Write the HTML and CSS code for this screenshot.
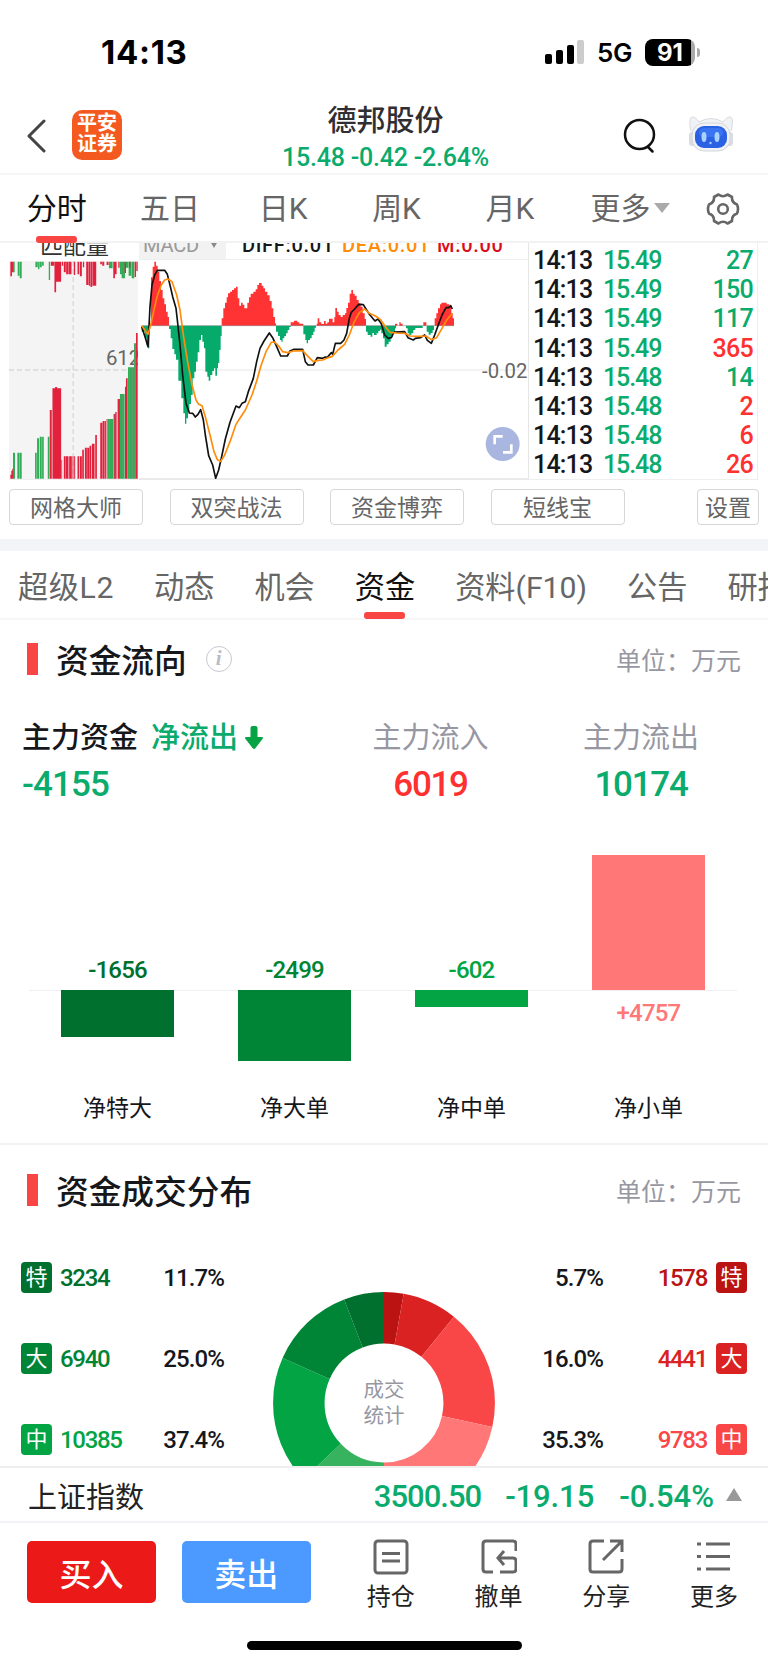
FILE: index.html
```
<!DOCTYPE html>
<html lang="zh-CN">
<head>
  <meta charset="UTF-8" />
  <meta name="viewport" content="width=device-width, initial-scale=1.0"/>
  <title>德邦股份</title>
  <link rel="stylesheet" href="styles.css">
</head>
<body>
  <div class="status-bar">
    <span class="clock">14:13</span>
    <div class="status-right">
      <svg class="signal" width="40" height="26" viewBox="0 0 40 26">
        <rect x="0" y="15" width="7" height="10" rx="2"/>
        <rect x="11" y="11" width="7" height="14" rx="2"/>
        <rect x="22" y="6" width="7" height="19" rx="2"/>
        <rect x="32" y="1" width="7" height="24" rx="2" fill="#ccc"/>
      </svg>
      <span class="network">5G</span>
      <span class="battery">91</span>
      <span class="battery-tip"></span>
    </div>
  </div>

  <div class="header">
    <svg class="back" width="20" height="34" viewBox="0 0 20 34"><path d="M17 2L2 17L17 32"/></svg>
    <div class="logo">平安<br>证券</div>
    <div class="stock">
      <h1>德邦股份</h1>
      <p class="num">15.48 -0.42 -2.64%</p>
    </div>
    <svg class="search" width="34" height="36" viewBox="0 0 34 36">
      <circle cx="16.500" cy="16.500" r="14.500"/>
      <path d="M25 29L29.500 33.500"/>
    </svg>
    <svg class="robot" width="46" height="38" viewBox="0 0 46 38">
      <path d="M3 16C1 8 2 2 4 2C7 2 9 4 11 7Q23 0 35 7C37 4 40 2 42 2C45 2 45 8 43 16" fill="#f1f2f5" stroke="#d8dade"/>
      <rect x="1" y="17" width="7" height="14" rx="3" fill="#d9dce2"/>
      <rect x="38" y="17" width="7" height="14" rx="3" fill="#d9dce2"/>
      <rect x="4" y="8" width="38" height="28" rx="12" fill="#f1f2f5" stroke="#d4d6db"/>
      <rect x="7" y="11" width="32" height="22" rx="9" fill="#2a62e3"/>
      <rect x="11" y="13" width="24" height="9" rx="5" fill="#3b74f0"/>
      <ellipse cx="16" cy="22" rx="2.500" ry="5" fill="#a9d2ff"/>
      <ellipse cx="29" cy="22" rx="2.500" ry="5" fill="#a9d2ff"/>
      <circle cx="22.500" cy="28" r="1.200" fill="#a9d2ff"/>
    </svg>
  </div>

  <div class="period-tabs">
    <span class="active">分时</span>
    <span>五日</span>
    <span>日K</span>
    <span>周K</span>
    <span>月K</span>
    <span class="more">更多<i class="tri-down"></i></span>
    <svg class="gear" width="34" height="34" viewBox="0 0 34 34">
      <path d="M12.500 2.500Q17 6 21.500 2.500L26 5Q25.500 10.500 31 12.500Q33 17 31 21.500Q25.500 23.500 26 29L21.500 31.500Q17 28 12.500 31.500L8 29Q8.500 23.500 3 21.500Q1 17 3 12.500Q8.500 10.500 8 5Z"/>
      <circle cx="17" cy="17" r="4.800"/>
    </svg>
  </div>

  <div class="chart-row">
    <div class="match">
      <div class="match-title">匹配量</div>
      <svg width="129" height="218" viewBox="30 78 386 654" preserveAspectRatio="none">
        <rect x="30" y="78" width="386" height="654" fill="#f4f4f4"/>
        <path d="M30 405H416M222 78V732" stroke="#d8d8d8" stroke-width="4" stroke-dasharray="15 9"/>
        <path fill="#31ad57" d="M42 80h5v32h-5zM56 80h5v42h-5zM62 80h6v50h-6zM109 80h7v17h-7zM117 80h4v23h-4zM122 80h6v17h-6zM129 80h5v12h-5zM149 80h4v55h-4zM329 80h11v20h-11zM362 80h5v38h-5zM367 80h10v50h-10zM380 80h7v18h-7zM388 80h8v42h-8zM397 80h8v50h-8z"/>
        <path fill="#e2213d" d="M34 80h5v44h-5zM39 80h4v32h-4zM155 80h10v12h-10zM166 80h5v92h-5zM171 80h15v60h-15zM188 80h4v12h-4zM194 80h6v32h-6zM201 80h7v38h-7zM209 80h8v38h-8zM224 80h4v40h-4zM235 80h5v38h-5zM242 80h6v44h-6zM251 80h4v17h-4zM261 80h7v70h-7zM269 80h4v72h-4zM274 80h5v76h-5zM280 80h11v72h-11zM303 80h5v8h-5zM309 80h6v12h-6zM322 80h6v10h-6zM342 80h5v50h-5zM347 80h5v38h-5zM357 80h4v18h-4zM376 80h4v34h-4zM389 80h4v18h-4zM406 80h4v46h-4zM411 80h4v28h-4z"/>
        <text x="320" y="391" class="axis">612</text>
        <path fill="#31ad57" d="M42 731v-78h6v78zM55 731v-78h6v78zM62 731v-78h6v78zM108 731v-78h5v78zM114 731v-121h6v121zM122 731v-126h6v126zM129 731v-126h5v126zM146 731v-126h5v126zM326 731v-179h16v179zM362 731v-254h14v254zM386 731v-334h18v334zM404 731v-406h6v406z"/>
        <path fill="#e2213d" d="M34 731v-12h3v-12h3v-6h3v30zM152 731v-206h6v206zM160 731v-271h8v-4h6v4h12v271zM187 731v-57h2v57zM194 731v-67h5v67zM200 731v-67h8v67zM210 731v-67h8v67zM220 731v-67h3v67zM225 731v-67h3v67zM235 731v-67h5v67zM242 731v-67h6v67zM249 731v-87h5v87zM257 731v-93h6v93zM264 731v-93h6v93zM271 731v-99h5v99zM278 731v-105h8v105zM288 731v-131h5v131zM303 731v-168h6v168zM310 731v-173h6v173zM317 731v-173h3v173zM322 731v-179h3v179zM343 731v-194h5v-6h4v200zM355 731v-239h7v239zM377 731v-276h3v-25h5v301zM410 731v-437h5v437z"/>
        <path stroke="#8f8f86" stroke-width="1.500" d="M331 731V552M371 731V477M391 731V400M399 731V400M407 731V328M347 731V535"/>
      </svg>
    </div>

    <div class="macd">
      <div class="macd-head">
        <span class="macd-select">MACD<i class="tri-small"></i></span>
        <span class="diff">DIFF:0.01</span>
        <span class="dea">DEA:0.01</span>
        <span class="m">M:0.00</span>
      </div>
      <svg width="389" height="219" viewBox="27 75 1167 657" preserveAspectRatio="none">
        <path d="M27 405H1194" stroke="#efefef" stroke-width="4"/>
        <path fill="#ff3333" d="M63 272V127H68V95H73V80H78V92H83V110H88V138H93V165H98V190H103V208H108V230H113V246H117V272ZM275 272V250H280V220H285V203H290V187H294V175H300V170H306V165H312V160H318V155H323V190H328V212H333V203H338V209H343V220H352V203H357V187H362V176H370V170H377V163H382V150H387V144H395V152H400V160H405V170H412V181H419V198H425V220H430V246H435V265H438V272ZM482 272V262H492V257H502V262H508V266H520V272ZM560 272V266H563V250H568V262H574V267H582V258H587V266H592V262H597V251H608V262H613V246H616V219H621V230H626V240H632V246H638V240H645V235H649V219H654V203H659V176H664V165H669V176H674V182H680V195H686V205H692V215H698V235H704V252H708V272ZM795 272V266H802V272ZM808 272V262H812V266H818V272ZM880 272V262H889V272ZM914 272V250H919V235H924V220H930V208H934V203H950V208H958V215H964V235H968V250H972V272Z"/>
        <path fill="#06ab6c" d="M35 272V290H45V310H50V330H54V340H58V272ZM117 272V282H122V310H127V342H133V358H138V374H145V437H154V490H160V535H165V566H169V550H174V530H178V507H183V480H188V430H193V410H198V380H203V352H208V315H213V300H217V320H222V340H226V410H232V425H236V437H241V420H247V408H252V400H256V422H261V400H264V384H268V345H272V303H275V272ZM438 272V290H444V303H450V315H454V320H458V310H463V303H468V295H473V285H478V276H482V272ZM520 272V298H526V315H530V325H534V315H540V310H545V300H550V290H554V278H558V272ZM708 272V290H713V300H722V305H727V294H732V300H740V295H745V288H750V284H754V295H759V310H764V335H770V328H776V320H782V305H788V290H795V280H798V272ZM828 272V280H833V295H838V300H844V295H850V285H856V279H878V272ZM890 272V290H896V299H902V294H908V285H912V272Z"/>
        <path stroke="#777" stroke-width="1.500" d="M35 272H972"/>
        <polyline class="line" stroke="#111" points="35,275 45,305 54,335 60,215 66,150 74,120 82,106 104,106 112,118 120,150 128,185 138,220 142,255 150,330 158,420 168,505 178,534 188,535 196,546 204,538 212,524 220,555 226,600 236,662 248,690 257,730 266,705 275,665 286,612 300,562 318,513 328,518 336,505 346,500 355,470 370,430 380,380 390,340 402,318 418,294 428,308 440,335 452,363 472,363 480,348 492,343 518,343 526,380 534,390 550,390 562,368 578,370 586,366 592,367 604,353 608,358 616,325 632,325 642,315 650,295 658,250 664,232 674,222 686,208 700,209 708,222 718,238 735,258 744,252 754,266 764,300 775,310 784,308 792,291 824,290 834,308 850,315 856,310 872,308 884,300 892,316 904,325 914,300 924,272 936,240 948,218 956,218 962,212 967,222"/>
        <polyline class="line" stroke="#ff8c0a" points="35,272 54,298 62,270 72,225 82,182 94,150 104,135 114,132 126,140 140,180 150,225 160,300 172,375 186,450 198,495 206,508 216,512 226,545 240,600 252,650 262,674 272,679 284,660 300,620 318,568 336,540 346,525 366,480 380,438 392,395 408,350 424,322 434,321 446,333 458,350 474,353 490,348 518,347 534,364 550,380 564,376 578,375 594,368 606,365 624,345 644,328 658,300 672,262 688,233 704,222 718,235 736,243 752,254 766,275 780,292 800,294 824,295 840,303 870,304 888,303 904,314 920,308 936,280 950,255 967,235"/>
        <text x="1192" y="430" class="axis end">-0.02</text>
        <circle cx="1118" cy="627" r="51" fill="#a9b7e0"/>
        <path d="M1094 628V604H1118M1144 628V652H1119" fill="none" stroke="#fff" stroke-width="8"/>
      </svg>
    </div>

    <div class="ticks num">
      <div class="tick"><b>14:13</b><span class="green">15.49</span><em class="green">27</em></div>
      <div class="tick"><b>14:13</b><span class="green">15.49</span><em class="green">150</em></div>
      <div class="tick"><b>14:13</b><span class="green">15.49</span><em class="green">117</em></div>
      <div class="tick"><b>14:13</b><span class="green">15.49</span><em class="red">365</em></div>
      <div class="tick"><b>14:13</b><span class="green">15.48</span><em class="green">14</em></div>
      <div class="tick"><b>14:13</b><span class="green">15.48</span><em class="red">2</em></div>
      <div class="tick"><b>14:13</b><span class="green">15.48</span><em class="red">6</em></div>
      <div class="tick"><b>14:13</b><span class="green">15.48</span><em class="red">26</em></div>
    </div>
  </div>

  <div class="tools">
    <a>网格大师</a>
    <a>双突战法</a>
    <a>资金博弈</a>
    <a>短线宝</a>
    <a class="setting">设置</a>
  </div>

  <div class="info-tabs">
    <span class="level2">超级L2</span>
    <span>动态</span>
    <span>机会</span>
    <span class="active">资金</span>
    <span>资料(F10)</span>
    <span>公告</span>
    <span>研报</span>
  </div>

  <div class="section flow">
    <div class="section-title">
      <h2>资金流向</h2>
      <span class="info">i</span>
      <span class="unit">单位：万元</span>
    </div>
    <div class="summary">
      <div class="main-fund">
        <p class="label">主力资金 <span class="green">净流出</span><svg width="20" height="24" viewBox="0 0 20 24"><path d="M6.500 2Q6.500 0 8.500 0H11.500Q13.500 0 13.500 2V11H17.500Q20 11 18.500 13L11.500 22Q10 24 8.500 22L1.500 13Q0 11 2.500 11H6.500Z" fill="#05a343"/></svg></p>
        <p class="value num green">-4155</p>
      </div>
      <div class="fund-in">
        <p class="label">主力流入</p>
        <p class="value num red">6019</p>
      </div>
      <div class="fund-out">
        <p class="label">主力流出</p>
        <p class="value num green">10174</p>
      </div>
    </div>
    <div class="bars">
      <div class="bar-col c1"><div class="up num">-1656</div><div class="down"><div class="bar"></div></div><p>净特大</p></div>
      <div class="bar-col c2"><div class="up num">-2499</div><div class="down"><div class="bar"></div></div><p>净大单</p></div>
      <div class="bar-col c3"><div class="up num">-602</div><div class="down"><div class="bar"></div></div><p>净中单</p></div>
      <div class="bar-col c4"><div class="up"><div class="bar"></div></div><div class="down num">+4757</div><p>净小单</p></div>
    </div>
  </div>

  <div class="section spread">
    <div class="section-title">
      <h2>资金成交分布</h2>
      <span class="unit">单位：万元</span>
    </div>
    <div class="dist">
      <div class="side left num">
        <div class="g1"><i>特</i><b>3234</b><span>11.7%</span></div>
        <div class="g2"><i>大</i><b>6940</b><span>25.0%</span></div>
        <div class="g3"><i>中</i><b>10385</b><span>37.4%</span></div>
      </div>
      <div class="donut">
        <svg width="222" height="222" viewBox="0 0 222 222">
          <!-- each half of the ring is 100 units long -->
          <g fill="none" stroke-width="51.500" transform="rotate(-90 111 111)">
            <circle cx="111" cy="111" r="85.200" pathLength="200" stroke="#bb1212" stroke-dasharray="5.700 200"/>
            <circle cx="111" cy="111" r="85.200" pathLength="200" stroke="#da2222" stroke-dasharray="16 200" stroke-dashoffset="-5.700"/>
            <circle cx="111" cy="111" r="85.200" pathLength="200" stroke="#f94646" stroke-dasharray="35.300 200" stroke-dashoffset="-21.700"/>
            <circle cx="111" cy="111" r="85.200" pathLength="200" stroke="#ff7777" stroke-dasharray="43 200" stroke-dashoffset="-57"/>
            <circle cx="111" cy="111" r="85.200" pathLength="200" stroke="#37b35f" stroke-dasharray="25.900 200" stroke-dashoffset="-100"/>
            <circle cx="111" cy="111" r="85.200" pathLength="200" stroke="#02a443" stroke-dasharray="37.400 200" stroke-dashoffset="-125.900"/>
            <circle cx="111" cy="111" r="85.200" pathLength="200" stroke="#008436" stroke-dasharray="25 200" stroke-dashoffset="-163.300"/>
            <circle cx="111" cy="111" r="85.200" pathLength="200" stroke="#00702e" stroke-dasharray="11.700 200" stroke-dashoffset="-188.300"/>
          </g>
        </svg>
        <div class="donut-text">成交<br>统计</div>
      </div>
      <div class="side right num">
        <div class="r1"><span>5.7%</span><b>1578</b><i>特</i></div>
        <div class="r2"><span>16.0%</span><b>4441</b><i>大</i></div>
        <div class="r3"><span>35.3%</span><b>9783</b><i>中</i></div>
      </div>
    </div>
  </div>

  <div class="index-bar">
    <span class="index-name">上证指数</span>
    <span class="num i1">3500.50</span>
    <span class="num i2">-19.15</span>
    <span class="num i3">-0.54%</span>
    <i class="tri-up"></i>
  </div>

  <div class="footer">
    <button class="buy">买入</button>
    <button class="sell">卖出</button>
    <div class="actions">
      <a>
        <svg width="36" height="36" viewBox="0 0 36 36"><rect x="2" y="2" width="32" height="32" rx="3"/><path d="M9 14.500H27M9 22H27"/></svg>
        持仓
      </a>
      <a>
        <svg width="36" height="36" viewBox="0 0 36 36"><path d="M35 12V5Q35 2 32 2H5Q2 2 2 5V30Q2 33 5 33H12M19 33H32Q35 33 35 30V22Q35 19 32 19H18M23 12L17 19L23 26"/></svg>
        撤单
      </a>
      <a>
        <svg width="36" height="36" viewBox="0 0 36 36"><path d="M16 2H5Q2 2 2 5V30Q2 33 5 33H31Q34 33 34 30V20M22 2H34V13M33 3L15 21"/></svg>
        分享
      </a>
      <a>
        <svg width="36" height="36" viewBox="0 0 36 36"><path d="M10 5H34M10 17.500H34M10 30H34M1 5H5M1 17.500H5M1 30H5"/></svg>
        更多
      </a>
    </div>
  </div>
  <div class="home-bar"></div>
</body>
</html>
```
FILE: styles.css
```
* {
  margin: 0;
  padding: 0;
  box-sizing: border-box;
}
body {
  width: 768px;
  height: 1665px;
  overflow: hidden;
  background: #fff;
  color: #16171b;
  font-family: Roboto, "Noto Sans CJK SC", sans-serif;
}
i, em {
  font-style: normal;
}
svg {
  display: block;
  flex-shrink: 0;
}
.num {
  font-family: Roboto, "Noto Sans CJK SC", sans-serif;
  font-weight: 500;
}
.green {
  color: #0aab6c;
}
.red {
  color: #ff3030;
}

/* status bar */
.status-bar {
  height: 88px;
  padding: 16px 68px 0 101px;
  display: flex;
  justify-content: space-between;
  align-items: center;
  color: #000;
  font-family: Inter, sans-serif;
}
.clock {
  font-size: 33px;
  font-weight: 700;
  letter-spacing: 0.7px;
}
.status-right {
  display: flex;
  align-items: center;
}
.network {
  margin-left: 12px;
  width: 37px;
  font-size: 26px;
  font-weight: 600;
  letter-spacing: -0.3px;
}
.battery {
  margin-left: 11px;
  width: 50px;
  height: 27px;
  line-height: 27px;
  border-radius: 8px;
  background: linear-gradient(90deg, #000 92%, #aaa 92%);
  color: #fff;
  text-align: center;
  font-size: 24px;
  font-weight: 700;
}
.battery-tip {
  margin-left: 2px;
  width: 3px;
  height: 9px;
  border-radius: 0 3px 3px 0;
  background: #aaa;
}

/* header */
.header {
  height: 87px;
  padding: 0 34px 0 27px;
  display: flex;
  align-items: center;
  border-bottom: 2px solid #f6f6f8;
}
.back {
  margin-top: 10px;
  fill: none;
  stroke: #444;
  stroke-width: 3;
  stroke-linecap: round;
  stroke-linejoin: round;
}
.logo {
  margin: 8px 0 0 25px;
  width: 50px;
  height: 50px;
  padding-top: 3px;
  border-radius: 10px;
  background: #f45a20;
  color: #fff;
  text-align: center;
  font-size: 20px;
  line-height: 21px;
  font-weight: 700;
}
.stock {
  flex: 1;
  padding-left: 26px;
  text-align: center;
}
.stock h1 {
  font-size: 29px;
  line-height: 36px;
  margin-top: 17px;
  font-weight: 500;
  color: #2f2f33;
}
.stock p {
  font-size: 25px;
  line-height: 34px;
  margin-top: 2px;
  letter-spacing: -0.2px;
  color: #0aab6c;
}
.search {
  margin: 11px 31px 0 0;
  fill: none;
  stroke: #111;
  stroke-width: 2.5;
  stroke-linecap: round;
}
.robot {
  margin-top: 7px;
}

/* period tabs */
.period-tabs {
  height: 68px;
  display: flex;
  align-items: center;
  border-bottom: 2px solid #f2f2f2;
  font-size: 30px;
  color: #666;
  position: relative;
  z-index: 1;
}
.period-tabs span {
  flex: 0 0 113.3px;
  height: 100%;
  line-height: 67px;
  text-align: center;
  position: relative;
}
.period-tabs .active,
.info-tabs .active {
  color: #111;
}
.period-tabs .active::after,
.info-tabs .active::after {
  content: "";
  position: absolute;
  left: 50%;
  bottom: -2px;
  width: 41px;
  margin-left: -21px;
  height: 7px;
  border-radius: 3px;
  background: #fa4545;
}
.period-tabs .more {
  display: flex;
  align-items: center;
  padding-left: 24px;
}
.tri-down {
  margin-left: 4px;
  border: 8px solid transparent;
  border-top: 10px solid #aaa;
  border-bottom: 0;
}
.gear {
  margin: 1px 0 0 26px;
  fill: none;
  stroke: #666;
  stroke-width: 2.6;
  stroke-linejoin: round;
}

/* charts */
.chart-row {
  height: 237px;
  padding: 0 10px 0 9px;
  display: flex;
  overflow: hidden;
}
.match {
  flex: 0 0 130px;
  border-bottom: 1px solid #eee;
}
.match-title {
  height: 33px;
  line-height: 38px;
  margin-top: -15px;
  padding-left: 31px;
  font-size: 23px;
  color: #333;
}
.axis {
  font-family: Roboto, sans-serif;
  font-size: 61px;
  fill: #666;
}
.end {
  text-anchor: end;
}
.macd {
  flex: 0 0 390px;
  border-right: 1px solid #e6e6e6;
  border-bottom: 2px solid #eaeaea;
}
.macd-head {
  height: 32px;
  margin-top: -15px;
  display: flex;
  align-items: center;
  border-bottom: 1px solid #eee;
  font-size: 20px;
  line-height: 34px;
  font-weight: 500;
  letter-spacing: 0.7px;
  white-space: nowrap;
}
.macd-select {
  flex: 0 0 87px;
  height: 31px;
  padding: 2px 0 0 4px;
  background: #f2f2f2;
  color: #999;
  letter-spacing: -0.2px;
  display: flex;
  align-items: center;
  font-weight: 400;
}
.tri-small {
  margin-left: 11px;
  border: 4px solid transparent;
  border-top: 7px solid #888;
  border-bottom: 0;
}
.diff {
  margin-left: 16px;
  width: 100px;
  padding-top: 2px;
}
.dea {
  width: 95px;
  padding-top: 2px;
  color: #ff8c0a;
}
.m {
  padding-top: 2px;
  color: #d9101c;
}
.line {
  fill: none;
  stroke-width: 5;
  stroke-linejoin: round;
}
.ticks {
  flex: 1;
  padding: 2px 4px 0 4px;
  border-right: 1px solid #eee;
  border-bottom: 1px solid #eee;
}
.tick {
  display: flex;
  height: 29.2px;
  line-height: 31px;
  font-size: 25px;
}
.tick b {
  width: 70px;
  font-weight: 500;
  letter-spacing: -0.8px;
}
.tick span {
  letter-spacing: -1.1px;
}
.tick em {
  margin-left: auto;
  letter-spacing: -0.7px;
}

.tools {
  height: 71px;
  padding: 9px 9px 0;
  display: flex;
  border-bottom: 12px solid #f3f4f8;
}
.tools a {
  width: 134px;
  height: 36px;
  margin-right: 26.500px;
  line-height: 38px;
  border: 1px solid #d6d6d6;
  border-radius: 4px;
  text-align: center;
  font-size: 23px;
  color: #666;
}
.tools .setting {
  width: 62px;
  margin: 0 0 0 auto;
}

.info-tabs {
  height: 69px;
  padding-left: 18px;
  display: flex;
  gap: 40px;
  border-bottom: 2px solid #f6f6f8;
  font-size: 30.200px;
  line-height: 73px;
  color: #666;
  white-space: nowrap;
}
.info-tabs span {
  position: relative;
}
.info-tabs .level2 {
  letter-spacing: 0.6px;
}
.info-tabs .active::after {
  bottom: -1px;
}

/* sections */
.section-title {
  display: flex;
  align-items: center;
  padding: 0 27px 0 27px;
  height: 32px;
}
.section-title::before {
  content: "";
  width: 11px;
  height: 32px;
  margin-right: 18px;
  background: #fa4545;
}
.section-title h2 {
  padding-top: 5px;
  font-size: 32.7px;
  line-height: 40px;
  font-weight: 500;
}
.info {
  margin-left: 19px;
  width: 26px;
  height: 26px;
  border: 1.5px solid #c8c8d2;
  border-radius: 50%;
  text-align: center;
  font: italic bold 21px/22px "Liberation Serif", serif;
  color: #bcbcc8;
}
.unit {
  margin-left: auto;
  font-size: 25px;
  color: #9797a2;
}
.flow {
  height: 525px;
  padding-top: 23px;
  border-bottom: 2px solid #f3f3f5;
}
.summary {
  display: flex;
  margin-top: 42px;
  padding-left: 22px;
}
.summary > div {
  text-align: center;
}
.summary .main-fund {
  width: 299px;
  text-align: left;
}
.fund-in {
  width: 219px;
}
.fund-out {
  width: 202px;
}
.label {
  height: 42px;
  line-height: 42px;
  font-size: 29px;
  color: #9797a2;
}
.main-fund .label {
  display: flex;
  align-items: center;
  font-weight: 500;
  color: #16171b;
}
.main-fund .label span {
  margin: 0 6px 0 13px;
}
.value {
  height: 51px;
  line-height: 51px;
  font-size: 35px;
  letter-spacing: -1.3px;
}
.main-fund .value {
  letter-spacing: -0.9px;
}
.bars {
  margin: 45px 31px 0 29px;
  height: 300px;
  display: flex;
}
.bar-col {
  flex: 1;
  font-size: 24px;
  text-align: center;
}
.bar-col .num {
  letter-spacing: -0.8px;
}
.up {
  height: 135px;
  display: flex;
  flex-direction: column;
  justify-content: flex-end;
  align-items: center;
  line-height: 40px;
}
.down {
  height: 98px;
  border-top: 1px solid #f0f0f4;
  line-height: 44px;
}
.bar {
  width: 113px;
  margin: -1px auto 0;
}
.bar-col p {
  font-size: 23px;
  line-height: 42px;
}
.c1 .num { color: #00702e; }
.c1 .bar { height: 47px; background: #00702e; }
.c2 .num { color: #008436; }
.c2 .bar { height: 71px; background: #008436; }
.c3 .num { color: #02a443; }
.c3 .bar { height: 17px; background: #02a443; }
.c4 .num { color: #ff7777; }
.c4 .bar { height: 135px; background: #ff7777; }

.spread {
  height: 321px;
  padding-top: 29px;
  overflow: hidden;
}
.dist {
  display: flex;
  padding: 56px 21px 0;
}
.side {
  width: 252px;
}
.side > div {
  height: 31px;
  margin-bottom: 50.2px;
  display: flex;
  align-items: center;
  font-size: 24px;
  line-height: 33px;
}
.side i {
  width: 31px;
  height: 31px;
  line-height: 31px;
  border-radius: 4px;
  color: #fff;
  font-size: 22px;
  font-weight: 400;
  text-align: center;
}
.side b {
  padding-top: 1px;
  font-weight: 500;
  letter-spacing: -1.3px;
}
.side span {
  padding-top: 1px;
  letter-spacing: -0.9px;
}
.left b {
  width: 103px;
  padding-left: 8px;
}
.left span {
  width: 69px;
  text-align: right;
}
.right > div {
  justify-content: flex-end;
}
.right b {
  width: 113px;
  padding-right: 9px;
  text-align: right;
}
.g1 i { background: #00702e; }
.g1 b { color: #00702e; }
.g2 i { background: #008436; }
.g2 b { color: #008436; }
.g3 i { background: #02a443; }
.g3 b { color: #02a443; }
.r1 i { background: #bb1212; }
.r1 b { color: #bb1212; }
.r2 i { background: #da2222; }
.r2 b { color: #da2222; }
.r3 i { background: #f94646; }
.r3 b { color: #f94646; }
.donut {
  width: 222px;
  height: 222px;
  margin-top: 30px;
  position: relative;
}
.donut-text {
  position: absolute;
  left: 0;
  right: 0;
  top: 85px;
  text-align: center;
  font-size: 20.5px;
  line-height: 26px;
  color: #9797a2;
}

/* bottom */
.index-bar {
  height: 57px;
  padding: 0 26px 0 28px;
  display: flex;
  align-items: center;
  border-top: 2px solid #eee;
  border-bottom: 2px solid #f2f2f8;
  background: #fff;
  font-size: 29px;
  color: #222;
}
.index-bar .num {
  padding-top: 3px;
  color: #0aab6c;
  font-size: 31px;
  letter-spacing: -1px;
}
.index-bar .i1 {
  margin-left: auto;
}
.index-bar .i2 {
  margin-left: 24px;
  letter-spacing: -0.1px;
}
.index-bar .i3 {
  margin-left: 25px;
  letter-spacing: 0;
}
.tri-up {
  margin-left: 12px;
  border: 8.5px solid transparent;
  border-bottom: 13px solid #999;
  border-top: 0;
}
.footer {
  height: 118px;
  padding: 18px 0 0 27px;
  display: flex;
}
.footer button {
  width: 129px;
  height: 62px;
  margin-right: 26px;
  border: 0;
  border-radius: 5px;
  color: #fff;
  font: 500 32px/62px "Noto Sans CJK SC", sans-serif;
}
.buy {
  background: #ec1919;
}
.sell {
  background: #4c99ff;
}
.actions {
  display: flex;
}
.actions a {
  width: 107.8px;
  display: flex;
  flex-direction: column;
  align-items: center;
  font-size: 24px;
  line-height: 40px;
  color: #222;
}
.actions svg {
  margin-top: -2px;
  margin-bottom: 2px;
  fill: none;
  stroke: #666;
  stroke-width: 3;
}
.home-bar {
  width: 275px;
  height: 9px;
  margin: 0 auto;
  border-radius: 5px;
  background: #000;
}
```
